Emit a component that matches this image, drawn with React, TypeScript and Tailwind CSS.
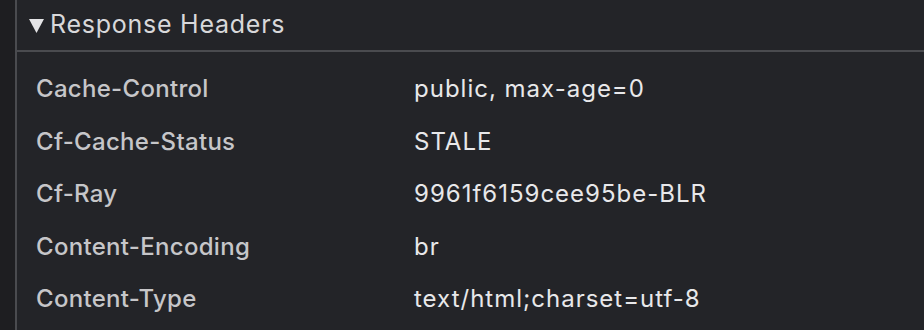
const headers: [string, string][] = [
  ['Cache-Control', 'public, max-age=0'],
  ['Cf-Cache-Status', 'STALE'],
  ['Cf-Ray', '9961f6159cee95be-BLR'],
  ['Content-Encoding', 'br'],
  ['Content-Type', 'text/html;charset=utf-8'],
];

export default function App() {
  return (
    <div className="flex h-[330px] w-[924px] overflow-hidden bg-[#1e1e21] font-['Inter',sans-serif]">
      <div className="w-[15px] shrink-0" />
      <div className="flex-1 border-l-2 border-[#4a4b4f] bg-[#232428]">
        <div className="flex h-[52px] items-center border-b-2 border-[#4a4b4f] pl-[12px] text-[25px] tracking-[0.75px] text-[#d8d8da]">
          <svg width="15" height="14" viewBox="0 0 15 14" className="mr-[6px] mt-[1px]">
            <path d="M0 0 H15 L7.5 14 Z" fill="#e4e4e6" />
          </svg>
          Response Headers
        </div>
        <div className="pt-[11px]">
          {headers.map(([k, v]) => (
            <div key={k} className="flex h-[52.5px] items-center">
              <div className="w-[397px] pl-[19px] text-[24px] font-medium tracking-[0.3px] text-[#c6c6c9]">{k}</div>
              <div className="text-[24px] tracking-[1px] text-[#e8e8ea]">{v}</div>
            </div>
          ))}
        </div>
      </div>
    </div>
  );
}
